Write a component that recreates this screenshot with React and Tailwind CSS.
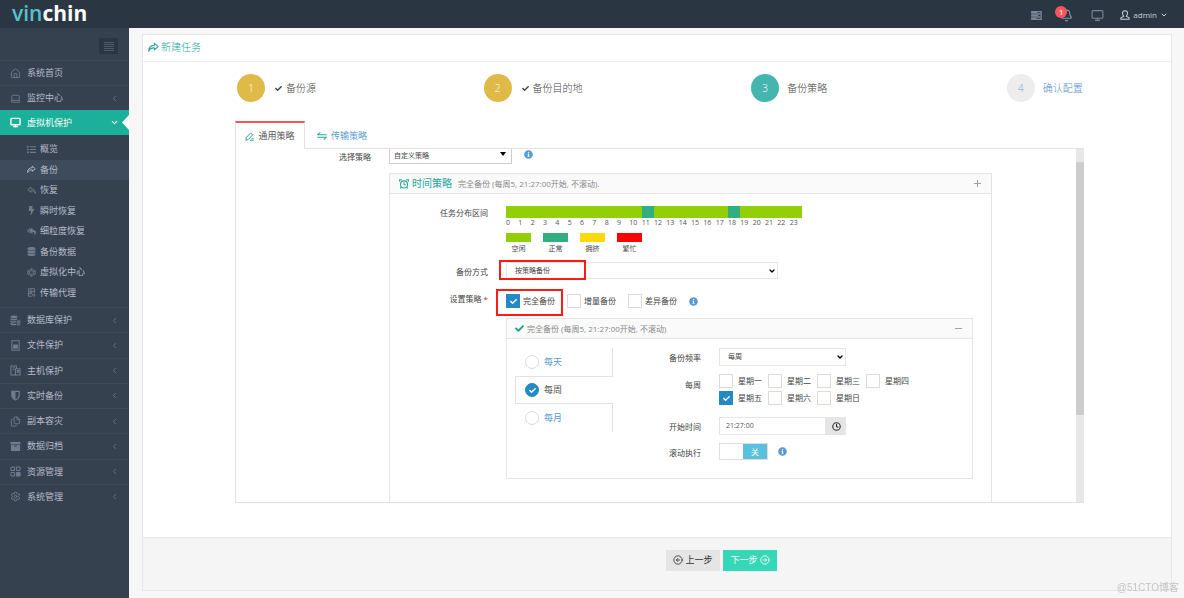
import { useState } from "react";
import {
  Bell,
  ChevronDown,
  ChevronLeft,
  CircleArrowLeft,
  CircleArrowRight,
  Clock,
  Files,
  House,
  Laptop,
  Minus,
  Monitor,
  Plus,
  Settings,
} from "lucide-react";
import {
  FaBolt,
  FaCheck,
  FaDatabase,
  FaInfoCircle,
  FaList,
  FaReplyAll,
} from "react-icons/fa";

const FONT =
  "font-['Open_Sans','Noto_Sans_CJK_SC',sans-serif]";

const subItems = [
  { label: "概览", icon: FaList },
  { label: "备份", icon: ShareIcon, active: true },
  { label: "恢复", icon: ReplyIcon },
  { label: "瞬时恢复", icon: FaBolt },
  { label: "细粒度恢复", icon: FaReplyAll },
  { label: "备份数据", icon: FaDatabase },
  { label: "虚拟化中心", icon: HexIcon },
  { label: "传输代理", icon: AgentIcon },
];

const lowerItems = [
  { label: "数据库保护", icon: DatabasesIcon },
  { label: "文件保护", icon: FileIcon },
  { label: "主机保护", icon: HostIcon },
  { label: "实时备份", icon: ShieldIcon },
  { label: "副本容灾", icon: Files },
  { label: "数据归档", icon: ArchiveIcon },
  { label: "资源管理", icon: BlocksIcon },
  { label: "系统管理", icon: Settings },
];

const hours = Array.from({ length: 24 }, (_, i) => i);
const normalHours = [11, 18];

const legend = [
  { label: "空闲", color: "bg-[#92cf06]" },
  { label: "正常", color: "bg-[#33ae80]" },
  { label: "拥挤", color: "bg-[#fcd90c]" },
  { label: "繁忙", color: "bg-[#fe0000]" },
];

const weekdays = [
  "星期一",
  "星期二",
  "星期三",
  "星期四",
  "星期五",
  "星期六",
  "星期日",
];

function ShareIcon({ className }) {
  return (
    <svg
      className={className}
      viewBox="0 0 24 24"
      fill="none"
      stroke="currentColor"
      strokeWidth="2.500"
      strokeLinejoin="round"
    >
      <path d="M14 3l8 7-8 7v-4C8 12.500 4 14.500 1.500 20 1.500 12 6 7.500 14 7z" />
    </svg>
  );
}

function ReplyIcon({ className }) {
  return (
    <svg
      className={className}
      viewBox="0 0 24 24"
      fill="none"
      stroke="currentColor"
      strokeWidth="2.500"
      strokeLinejoin="round"
    >
      <path d="M10 3L2 10l8 7v-4c6-.5 10 1.500 12.500 7C22.500 12 18 7.500 10 7z" />
    </svg>
  );
}

function HexIcon({ className }) {
  return (
    <svg
      className={className}
      viewBox="0 0 24 24"
      fill="none"
      stroke="currentColor"
      strokeWidth="2.200"
    >
      <path d="M12 2l10 6v8l-10 6-10-6V8z" />
      <path d="M12 7l5 3v4l-5 3-5-3v-4zM2 8l5 2M22 8l-5 2M2 16l5-2M22 16l-5-2M12 2v5M12 22v-5" />
    </svg>
  );
}

function AgentIcon({ className }) {
  return (
    <svg
      className={className}
      viewBox="0 0 24 24"
      fill="none"
      stroke="currentColor"
      strokeWidth="2.500"
    >
      <path d="M20 13V2H4v20h9M4 9h16M4 15h10M8 5.500h5M8 12h5" />
      <circle cx="18" cy="19" r="3" />
    </svg>
  );
}

function DatabasesIcon({ className }) {
  return (
    <svg className={className} viewBox="0 0 24 24" fill="currentColor">
      <ellipse cx="8.500" cy="4" rx="7.500" ry="3" />
      <path d="M1 6.500c3 2.500 12 2.500 15 0V10c-3 2-12 2-15 0zM1 11.500c3 2.500 8 2.500 12 1.500v3c-4 1-9 1-12-1zM1 17c3 2 8 2.500 12 1.500v3.500c-4 1-9 .5-12-1.500z" />
      <path d="M14.500 12h8v2.500h-8zM14.500 16h8v2.500h-8zM14.500 20h8v2.500h-8z" />
    </svg>
  );
}

function FileIcon({ className }) {
  return (
    <svg
      className={className}
      viewBox="0 0 24 24"
      fill="none"
      stroke="currentColor"
      strokeWidth="2.200"
    >
      <path d="M4 1.500h16v21H4z" />
      <path d="M8 11h8v7H8z" fill="currentColor" />
    </svg>
  );
}

function HostIcon({ className }) {
  return (
    <svg
      className={className}
      viewBox="0 0 24 24"
      fill="none"
      stroke="currentColor"
      strokeWidth="2.200"
    >
      <path d="M12 22H2V2h12v5M6 6h4M6 10h3" />
      <path d="M12 8h10v14H12zM16 12h3v4h-3z" />
    </svg>
  );
}

function ShieldIcon({ className }) {
  return (
    <svg
      className={className}
      viewBox="0 0 24 24"
      fill="none"
      stroke="currentColor"
      strokeWidth="2.500"
    >
      <path d="M4 3h16v9c0 5-4 8-8 10-4-2-8-5-8-10z" />
      <path d="M4 3h8v19c-4-2-8-5-8-10z" fill="currentColor" stroke="none" />
    </svg>
  );
}

function ArchiveIcon({ className }) {
  return (
    <svg className={className} viewBox="0 0 24 24" fill="currentColor">
      <path d="M1 2h22v5H1z" />
      <path fillRule="evenodd" d="M2 8h20v14H2zM9 10v2h6v-2z" />
    </svg>
  );
}

function BlocksIcon({ className }) {
  return (
    <svg
      className={className}
      viewBox="0 0 24 24"
      fill="none"
      stroke="currentColor"
      strokeWidth="2.200"
    >
      <rect x="2" y="2" width="8" height="8" rx="2" />
      <rect x="14" y="2" width="8" height="8" rx="2" />
      <rect x="2" y="14" width="8" height="8" rx="2" />
      <rect x="14" y="14" width="8" height="8" rx="2" fill="currentColor" />
    </svg>
  );
}

function ServerRowsIcon({ className }) {
  return (
    <svg className={className} viewBox="0 0 24 20" fill="currentColor">
      <path
        fillRule="evenodd"
        d="M0 0h24v6H0zM14 2v2h7V2zM0 7h24v6H0zM16 9v2h5V9zM0 14h24v6H0zM12 16v2h9v-2z"
      />
    </svg>
  );
}

function PersonIcon({ className }) {
  return (
    <svg
      className={className}
      viewBox="0 0 24 24"
      fill="none"
      stroke="currentColor"
      strokeWidth="2.500"
      strokeLinejoin="round"
    >
      <path d="M12 2c4 0 6 3 6 6 0 3-1 5-3 7l7 4v3H2v-3l7-4c-2-2-3-4-3-7 0-3 2-6 6-6z" />
    </svg>
  );
}

function TransferIcon({ className }) {
  return (
    <svg
      className={className}
      viewBox="0 0 24 24"
      fill="none"
      stroke="currentColor"
      strokeWidth="2.500"
    >
      <path d="M23 9H2l6-6M1 15h21l-6 6" />
    </svg>
  );
}

function EditIcon({ className }) {
  return (
    <svg
      className={className}
      viewBox="0 0 24 24"
      fill="none"
      stroke="currentColor"
      strokeWidth="2.500"
      strokeLinejoin="round"
    >
      <path d="M2 22l2-8L15 2.500l5.500 5L9.500 19.500zM13 22h10M17 18h6" />
    </svg>
  );
}

function AlarmIcon({ className }) {
  return (
    <svg
      className={className}
      viewBox="0 0 24 24"
      fill="none"
      stroke="currentColor"
      strokeWidth="2.500"
    >
      <circle cx="12" cy="13" r="8.500" />
      <path d="M12 8v6h4M1.500 6.500V2H7M22.500 6.500V2H17M5 20l-2 3M19 20l2 3" />
    </svg>
  );
}

function NavItem({ label, icon: Icon }) {
  return (
    <li className="border-t border-[#3d4957]">
      <a href="#" className="flex h-full items-center pr-[10px] pl-[10px]">
        <Icon className="size-[11px] text-[#6f7c8e]" strokeWidth={2} />
        <span className="ml-[6px] flex-1">{label}</span>
        {label !== "系统首页" && (
          <ChevronLeft className="size-[9px] text-[#6f7c8e]" />
        )}
      </a>
    </li>
  );
}

function Sidebar() {
  return (
    <nav className="w-[129px] shrink-0 bg-[#364150] text-[9px] leading-3 text-[#b4bcc8]">
      <div className="flex h-8 items-center justify-end pt-1 pr-[11px]">
        <button
          type="button"
          aria-label="菜单"
          className="flex h-4 w-[19px] flex-col items-center justify-center gap-px bg-[#2b3643]"
        >
          <span className="h-px w-[10px] bg-[#4c5b6c]" />
          <span className="h-px w-[10px] bg-[#4c5b6c]" />
          <span className="h-px w-[10px] bg-[#4c5b6c]" />
          <span className="h-px w-[10px] bg-[#4c5b6c]" />
          <span className="h-px w-[10px] bg-[#4c5b6c]" />
        </button>
      </div>
      <ul className="grid auto-rows-[25px]">
        <NavItem label="系统首页" icon={House} />
        <NavItem label="监控中心" icon={Laptop} />
      </ul>
      <a
        href="#"
        className="relative flex h-[25px] items-center bg-[#1caf9a] pr-[10px] pl-[10px] text-white"
      >
        <Monitor className="size-[11px]" strokeWidth={3} />
        <span className="ml-[6px] flex-1">虚拟机保护</span>
        <ChevronDown className="size-[9px]" strokeWidth={3} />
        <svg
          className="absolute top-[5px] right-0 h-[15px] w-[7px]"
          viewBox="0 0 7 15"
          fill="#fff"
        >
          <path d="M7 0v15L0 7.500z" />
        </svg>
      </a>
      <ul className="my-1 grid h-[164px] grid-rows-8">
        {subItems.map(({ label, icon: Icon, active }) => (
          <li key={label}>
            <a
              href="#"
              className={`flex h-full items-center pl-[27px] ${active ? "bg-[#3e4b5c]" : ""}`}
            >
              <Icon
                className={`size-[9px] ${active ? "text-[#b4bcc8]" : "text-[#6f7c8e]"}`}
              />
              <span className="ml-1">{label}</span>
            </a>
          </li>
        ))}
      </ul>
      <ul className="grid h-[202px] grid-rows-8">
        {lowerItems.map((item) => (
          <NavItem key={item.label} {...item} />
        ))}
      </ul>
    </nav>
  );
}

function Header() {
  return (
    <header className="flex h-7 items-center bg-[#2b3643] pr-4 pl-3 text-[8px] text-[#c6cfda]">
      <a
        href="#"
        className="pb-[2px] text-[21px] leading-6 font-bold text-white"
      >
        <span className="font-semibold text-[#59c0cb]">vin</span>chin
      </a>
      <div className="ml-auto flex items-center pt-[2px]">
        <ServerRowsIcon className="h-[9px] w-[11px] text-[#79869a]" />
        <div className="relative ml-[18px]">
          <Bell className="size-[13px] text-[#8a96a8]" strokeWidth={2} />
          <span className="absolute -top-[3px] -left-[5px] flex size-3 items-center justify-center rounded-full bg-[#f3565d] text-[8px] text-white">
            1
          </span>
        </div>
        <Monitor
          className="ml-[18px] size-[13px] text-[#79869a]"
          strokeWidth={2}
        />
        <button type="button" className="ml-4 flex items-center">
          <PersonIcon className="size-[10px]" />
          <span className="mx-[3px]">admin</span>
          <ChevronDown className="size-2" strokeWidth={3} />
        </button>
      </div>
    </header>
  );
}

function Step({ number, label, status }) {
  const circle = {
    done: "bg-[#dfba49] text-white",
    active: "bg-[#44b6ae] text-white",
    next: "bg-[#ededed] text-[#7ba3cd]",
  }[status];

  return (
    <li
      className={`flex items-center text-[10px] font-light whitespace-nowrap ${status === "next" ? "text-[#5b8fc7]" : "text-[#444]"}`}
    >
      <span
        className={`mr-2 flex size-7 shrink-0 items-center justify-center rounded-full ${circle}`}
      >
        {number}
      </span>
      {status === "done" && <FaCheck className="mr-1 ml-[2px] size-[7px]" />}
      {label}
    </li>
  );
}

// Native checkbox or radio with a blue checked look
function Tick({ type = "checkbox", ...props }) {
  return (
    <span className="grid shrink-0 place-items-center">
      <input
        type={type}
        className="peer col-start-1 row-start-1 size-[14px] appearance-none border border-[#dedbd6] bg-white checked:border-[#2489c5] checked:bg-[#2489c5] [&[type=radio]]:rounded-full"
        {...props}
      />
      <FaCheck className="pointer-events-none col-start-1 row-start-1 hidden size-[7px] text-white peer-checked:block" />
    </span>
  );
}

function Select({ id, value, className, caret }) {
  return (
    <span className={`grid items-center ${className}`}>
      <select
        id={id}
        defaultValue={value}
        className={`col-start-1 row-start-1 h-full w-full appearance-none border bg-white text-[7px] text-[#444] ${caret ? "border-t-0 border-[#ccc] pl-1" : "border-[#e5e5e5] pl-2"}`}
      >
        <option>{value}</option>
      </select>
      {caret ? (
        <svg
          className="pointer-events-none col-start-1 row-start-1 mt-[3px] mr-[6px] h-1 w-[6px] self-start justify-self-end"
          viewBox="0 0 6 4"
        >
          <path d="M0 0h6L3 4z" />
        </svg>
      ) : (
        <ChevronDown
          className="pointer-events-none col-start-1 row-start-1 mr-[2px] size-2 justify-self-end text-black"
          strokeWidth={4}
        />
      )}
    </span>
  );
}

function Info() {
  return <FaInfoCircle className="size-[9px] shrink-0 text-[#5a9bd5]" />;
}

function PlanPanel() {
  const [period, setPeriod] = useState("每周");
  const [days, setDays] = useState(["星期五"]);
  const [rolling, setRolling] = useState(false);

  const toggleDay = (day) =>
    setDays(
      days.includes(day) ? days.filter((d) => d !== day) : [...days, day],
    );

  return (
    <section className="border border-[#e5e5e5]">
      <div className="flex h-5 items-center border-b border-[#e5e5e5] bg-[#fafafa] pr-2 pl-2 text-[8px] text-[#888]">
        <FaCheck className="mr-[3px] size-[9px] text-[#169f85]" />
        完全备份 (每周5, 21:27:00开始, 不滚动)
        <Minus
          className="ml-auto size-[11px] text-[#999]"
          strokeWidth={2}
        />
      </div>
      <div className="flex pt-[9px] pb-[18px] pl-2">
        {/* Period tabs */}
        <div className="w-[98px] shrink-0 text-[9px]">
          {["每天", "每周", "每月"].map((item) => (
            <label
              key={item}
              className={`flex h-7 items-center gap-[5px] ${
                period === item
                  ? "rounded-l-xs border border-r-0 border-[#e2e2e2] pl-[9px] text-[#555]"
                  : "border-r border-[#e2e2e2] pl-[10px] text-[#5b9bd1]"
              }`}
            >
              <Tick
                type="radio"
                name="period"
                checked={period === item}
                onChange={() => setPeriod(item)}
              />
              {item}
            </label>
          ))}
        </div>

        {/* Schedule fields */}
        <div className="grid flex-1 grid-cols-[88px_1fr] gap-x-[18px] text-[8px] leading-3">
          <label htmlFor="frequency" className="mt-1 text-right">
            备份频率
          </label>
          <Select id="frequency" value="每周" className="h-[18px] w-[127px]" />

          <span className="mt-[13px] text-right">每周</span>
          <div className="mt-2 grid grid-cols-[repeat(4,49px)] gap-y-[3px]">
            {weekdays.map((day) => (
              <label
                key={day}
                className="flex items-center gap-[5px] whitespace-nowrap"
              >
                <Tick
                  checked={days.includes(day)}
                  onChange={() => toggleDay(day)}
                />
                {day}
              </label>
            ))}
          </div>

          <label htmlFor="start" className="mt-4 text-right">
            开始时间
          </label>
          <div className="mt-3 flex h-[18px] w-[127px]">
            <input
              id="start"
              defaultValue="21:27:00"
              className="min-w-0 flex-1 border border-[#e5e5e5] px-[6px] text-[7px] text-[#555]"
            />
            <button
              type="button"
              aria-label="选择时间"
              className="flex w-5 items-center justify-center bg-[#e5e5e5] text-[#333]"
            >
              <Clock className="size-[9px]" strokeWidth={3} />
            </button>
          </div>

          <span className="mt-3 text-right">滚动执行</span>
          <div className="mt-2 flex items-center gap-[10px]">
            <button
              type="button"
              role="switch"
              aria-label="滚动执行"
              aria-checked={rolling}
              onClick={() => setRolling(!rolling)}
              className={`flex h-[17px] w-[49px] border border-[#ddd] ${rolling ? "" : "justify-end"}`}
            >
              <span className="flex h-full w-6 items-center justify-center bg-[#5bc0de] text-[8px] text-white">
                {rolling ? "开" : "关"}
              </span>
            </button>
            <Info />
          </div>
        </div>
      </div>
    </section>
  );
}

function TimePolicy() {
  return (
    <section className="mt-[9px] mr-[84px] ml-[153px] border border-b-0 border-[#e5e5e5]">
      <div className="flex h-5 items-center border-b border-[#e5e5e5] bg-[#fafafa] pr-2 pl-[9px] text-[8px] text-[#888]">
        <AlarmIcon className="mr-[3px] size-[10px] text-[#26a69a]" />
        <h2 className="mr-[6px] text-[10px] text-[#26a69a]">时间策略</h2>
        完全备份 (每周5, 21:27:00开始, 不滚动).
        <Plus
          className="ml-auto size-[11px] text-[#999]"
          strokeWidth={2}
        />
      </div>
      <div className="grid grid-cols-[98px_1fr] gap-x-[18px] pt-3 pr-[18px] pb-[23px] text-[8px] leading-3 text-[#444]">
        <span className="pt-px text-right">任务分布区间</span>
        <div>
          <div className="grid w-[296px] grid-cols-24 text-[7px] leading-[9px] text-[#555]">
            {hours.map((hour) => (
              <div key={hour}>
                <div
                  className={`h-3 ${normalHours.includes(hour) ? "bg-[#33ae80]" : "bg-[#92cf06]"}`}
                />
                {hour}
              </div>
            ))}
          </div>
          <ul className="mt-[6px] flex gap-3 text-[7px] leading-3">
            {legend.map((item) => (
              <li key={item.label} className="w-[25px] text-center">
                <div className={`mb-px h-[9px] ${item.color}`} />
                {item.label}
              </li>
            ))}
          </ul>
        </div>

        <label htmlFor="mode" className="mt-[11px] text-right">
          备份方式
        </label>
        <div className="relative mt-[7px]">
          <Select id="mode" value="按策略备份" className="h-[17px] w-[272px]" />
          <span className="pointer-events-none absolute -top-[2px] -left-[7px] h-5 w-[87px] border-2 border-[#fb1d14]" />
        </div>

        <span className="mt-[14px] text-right">
          设置策略 <span className="text-[#e02222]">*</span>
        </span>
        <div className="relative mt-[15px] mb-[10px] flex items-center gap-3">
          <label className="flex items-center gap-[3px]">
            <Tick defaultChecked />
            完全备份
          </label>
          <label className="flex items-center gap-[3px]">
            <Tick />
            增量备份
          </label>
          <label className="flex items-center gap-[3px]">
            <Tick />
            差异备份
          </label>
          <Info />
          <span className="pointer-events-none absolute -top-[5px] -left-[10px] h-[27px] w-[67px] border-2 border-[#fb1d14]" />
        </div>

        <div className="col-start-2">
          <PlanPanel />
        </div>
      </div>
    </section>
  );
}

export default function App() {
  return (
    <div
      className={`${FONT} flex min-h-screen flex-col bg-[#f7f7f7] text-[#444]`}
    >
      <Header />
      <div className="flex flex-1">
        <Sidebar />
        <main className="flex min-w-0 flex-1 flex-col pt-[6px] pr-3 pb-[7px] pl-[13px]">
          <div className="flex flex-1 flex-col border border-[#e7e7e7] bg-white">
            <h1 className="flex h-[27px] items-center gap-[2px] border-b border-[#eee] pb-px pl-[5px] text-[10px] font-light text-[#26a69a]">
              <ShareIcon className="size-[11px]" />
              新建任务
            </h1>

            <div className="flex-1 pr-[87px] pb-[34px] pl-[92px]">
              <ol className="mt-3 ml-[2px] grid grid-cols-[246fr_267fr_255fr_77fr]">
                <Step number={1} label="备份源" status="done" />
                <Step number={2} label="备份目的地" status="done" />
                <Step number={3} label="备份策略" status="active" />
                <Step number={4} label="确认配置" status="next" />
              </ol>

              <div className="mt-[19px] flex h-7 text-[9px]">
                <a
                  href="#"
                  className="flex w-[70px] items-center justify-center gap-1 border-x border-t-2 border-x-[#e2e2e2] border-t-[#f3565d] text-[#555]"
                >
                  <EditIcon className="size-[9px] text-[#26a69a]" />
                  通用策略
                </a>
                <a
                  href="#"
                  className="flex flex-1 items-center gap-1 border-b border-[#e2e2e2] pt-[2px] pl-3 text-[#5b9bd1]"
                >
                  <TransferIcon className="size-[10px] text-[#26a69a]" />
                  传输策略
                </a>
              </div>

              <div className="flex border-b border-l border-[#e2e2e2]">
                <div className="min-w-0 flex-1">
                  <div className="flex h-[15px] items-center text-[8px] leading-3">
                    <label
                      htmlFor="policy"
                      className="mr-[18px] w-[135px] text-right"
                    >
                      选择策略
                    </label>
                    <Select
                      id="policy"
                      value="自定义策略"
                      className="h-[15px] w-[123px]"
                      caret
                    />
                    <span className="ml-3 self-start pt-px">
                      <Info />
                    </span>
                  </div>
                  <TimePolicy />
                </div>
                {/* Scroll track */}
                <div className="w-2 bg-[#e8e8e8] pt-[13px]">
                  <div className="h-[253px] bg-[#cdcdcd]" />
                </div>
              </div>
            </div>

            <div className="flex h-[53px] items-center justify-center gap-[3px] border-t border-[#e7e7e7] bg-[#f5f5f5] pb-2 pl-[129px] text-[9px]">
              <button
                type="button"
                className="flex h-[21px] w-[54px] items-center justify-center gap-[2px] bg-[#e5e5e5] text-[#333]"
              >
                <CircleArrowLeft className="size-[10px]" />
                上一步
              </button>
              <button
                type="button"
                className="flex h-[21px] w-[54px] items-center justify-center gap-[2px] bg-[#36d7b7] text-white"
              >
                下一步
                <CircleArrowRight className="size-[10px]" />
              </button>
            </div>
          </div>
        </main>
      </div>
      <span className="fixed right-[5px] bottom-1 font-['Liberation_Sans','Noto_Sans_CJK_SC',sans-serif] text-[10px] leading-3 text-[#c4c4c4]">
        @51CTO博客
      </span>
    </div>
  );
}
